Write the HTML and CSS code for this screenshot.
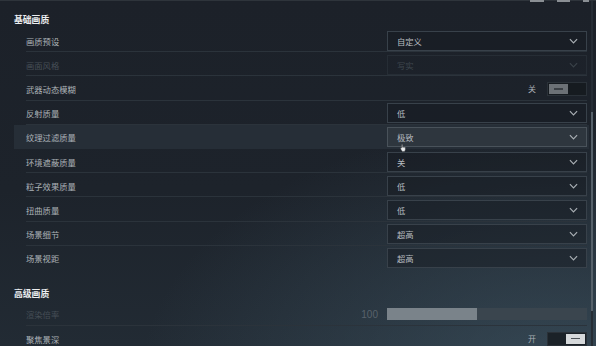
FILE: index.html
```html
<!DOCTYPE html>
<html lang="zh-CN">
<head>
<meta charset="utf-8">
<link rel="stylesheet" href="styles.css">
</head>
<body>
<div class="topbar"><span class="tab t1"></span><span class="tab t2"></span><span class="tab t3"></span></div>
<div class="page">
  <div class="content">
    <section class="section">
      <div class="sec-title">基础画质</div>
      <div class="row"><div class="row-in"><span class="label">画质预设</span>
        <div class="select"><span>自定义</span><svg class="chev" viewBox="0 0 10 6"><path d="M1 1L5 5L9 1"/></svg></div></div></div>
      <div class="row disabled"><div class="row-in"><span class="label">画面风格</span>
        <div class="select"><span>写实</span><svg class="chev" viewBox="0 0 10 6"><path d="M1 1L5 5L9 1"/></svg></div></div></div>
      <div class="row"><div class="row-in"><span class="label">武器动态模糊</span>
        <div class="switch-wrap"><span class="sw-text">关</span><div class="switch off"><span class="knob"><i></i></span></div></div></div></div>
      <div class="row"><div class="row-in"><span class="label">反射质量</span>
        <div class="select"><span>低</span><svg class="chev" viewBox="0 0 10 6"><path d="M1 1L5 5L9 1"/></svg></div></div></div>
      <div class="row hover"><div class="row-in"><span class="label">纹理过滤质量</span>
        <div class="select"><span>极致</span><svg class="chev" viewBox="0 0 10 6"><path d="M1 1L5 5L9 1"/></svg>
          <svg class="cursor" viewBox="0 0 7 9"><path d="M2 0.5h1v3h3.2v3.2L5.2 8.5H2.6L0.8 5.6V4.2H2z"/></svg></div></div></div>
      <div class="row"><div class="row-in"><span class="label">环境遮蔽质量</span>
        <div class="select"><span>关</span><svg class="chev" viewBox="0 0 10 6"><path d="M1 1L5 5L9 1"/></svg></div></div></div>
      <div class="row"><div class="row-in"><span class="label">粒子效果质量</span>
        <div class="select"><span>低</span><svg class="chev" viewBox="0 0 10 6"><path d="M1 1L5 5L9 1"/></svg></div></div></div>
      <div class="row"><div class="row-in"><span class="label">扭曲质量</span>
        <div class="select"><span>低</span><svg class="chev" viewBox="0 0 10 6"><path d="M1 1L5 5L9 1"/></svg></div></div></div>
      <div class="row"><div class="row-in"><span class="label">场景细节</span>
        <div class="select"><span>超高</span><svg class="chev" viewBox="0 0 10 6"><path d="M1 1L5 5L9 1"/></svg></div></div></div>
      <div class="row last"><div class="row-in"><span class="label">场景视距</span>
        <div class="select"><span>超高</span><svg class="chev" viewBox="0 0 10 6"><path d="M1 1L5 5L9 1"/></svg></div></div></div>
    </section>
    <section class="section sec2">
      <div class="sec-title">高级画质</div>
      <div class="row disabled"><div class="row-in"><span class="label">渲染倍率</span>
        <div class="slider-wrap"><span class="sl-val">100</span><div class="slider"><div class="fill" style="width:45%"></div></div></div></div></div>
      <div class="row"><div class="row-in"><span class="label">聚焦景深</span>
        <div class="switch-wrap"><span class="sw-text">开</span><div class="switch on"><span class="knob"><i></i></span></div></div></div></div>
    </section>
  </div>
  <div class="scrollbar"><div class="thumb"></div></div>
</div>
</body>
</html>
```
FILE: styles.css
```css
html, body {
  margin: 0;
  padding: 0;
  width: 596px;
  height: 346px;
  overflow: hidden;
}
body {
  background:
    radial-gradient(ellipse 420px 260px at 560px 380px, rgba(70, 96, 112, 0.55), rgba(70, 96, 112, 0) 100%),
    linear-gradient(180deg, #1c2129 0%, #1d232b 55%, #222b34 100%);
  font-family: "Noto Sans CJK SC", "Noto Sans", sans-serif;
  color: #acb2b7;
  font-size: 8.3px;
  position: relative;
}
.topbar {
  height: 1px;
  background: #2e343b;
  display: flex;
  justify-content: flex-end;
  gap: 13px;
  padding-right: 7px;
}
.tab { height: 2px; background: #8a8f94; }
.t1 { width: 14px; }
.t2 { width: 13px; }
.t3 { width: 6px; }
.page {
  display: flex;
  height: 345px;
}
.content {
  width: 575px;
  padding-left: 14px;
  padding-top: 11px;
}
.section { display: flex; flex-direction: column; }
.sec2 { margin-top: 16px; }
.sec-title {
  color: #eceef0;
  font-weight: 700;
  font-size: 8.8px;
  line-height: 16px;
  height: 16px;
}
.row {
  height: 24.2px;
  box-sizing: border-box;
  padding-left: 12px;
  padding-right: 2px;
}
.row-in {
  height: 100%;
  box-sizing: border-box;
  display: flex;
  align-items: center;
  padding-top: 2px;
  border-bottom: 1px solid #2b333b;
}
.row.last .row-in { border-bottom-color: transparent; }
.row.hover {
  background: #262e37;
}
.row.hover .row-in { border-bottom-color: transparent; }
.label { flex: 1; }
.disabled .label { color: #464e56; }
.select {
  width: 200px;
  height: 20px;
  box-sizing: border-box;
  border: 1px solid #38414a;
  background: rgba(22, 27, 33, 0.45);
  display: flex;
  align-items: center;
  justify-content: space-between;
  padding: 0 8px 0 9px;
  color: #b8bdc1;
  position: relative;
}
.chev { width: 9px; height: 6px; }
.chev path { fill: none; stroke: #a9afb4; stroke-width: 1.3; }
.hover .select {
  background: #2e363e;
  border-color: #49525a;
}
.disabled .select {
  border-color: #262d35;
  background: transparent;
  color: #3f474f;
}
.disabled .chev path { stroke: #3a4249; }
.cursor {
  position: absolute;
  left: 12px;
  top: 16px;
  width: 6px;
  height: 8px;
}
.cursor path { fill: #e9ecee; stroke: #333; stroke-width: 0.4; }
.switch-wrap {
  display: flex;
  align-items: center;
  gap: 11px;
}
.sw-text { color: #a9afb4; font-size: 8px; }
.switch {
  width: 40px;
  height: 14px;
  box-sizing: border-box;
  border: 1px solid #2a3138;
  background: #161b20;
  display: flex;
  padding: 1px;
}
.switch.on { justify-content: flex-end; background: #1b2228; }
.knob {
  width: 19px;
  height: 100%;
  background: #6c7176;
  display: flex;
  align-items: center;
  justify-content: center;
}
.knob i { width: 9px; height: 1.5px; background: #3b4045; }
.on .knob { background: #d6d9db; }
.on .knob i { background: #4d5257; }
.slider-wrap {
  display: flex;
  align-items: center;
  gap: 9px;
}
.sl-val {
  font-family: "Liberation Sans", "Noto Sans", sans-serif;
  color: #58626b;
  font-size: 10px;
}
.slider {
  width: 200px;
  height: 12px;
  background: #3a454e;
  display: flex;
}
.fill { background: #7a838a; height: 100%; }
.scrollbar {
  width: 2px;
  margin-left: 2px;
  background: #262d35;
  display: flex;
  flex-direction: column;
  padding-top: 111px;
}
.thumb { height: 199px; background: #56616a; }
```
